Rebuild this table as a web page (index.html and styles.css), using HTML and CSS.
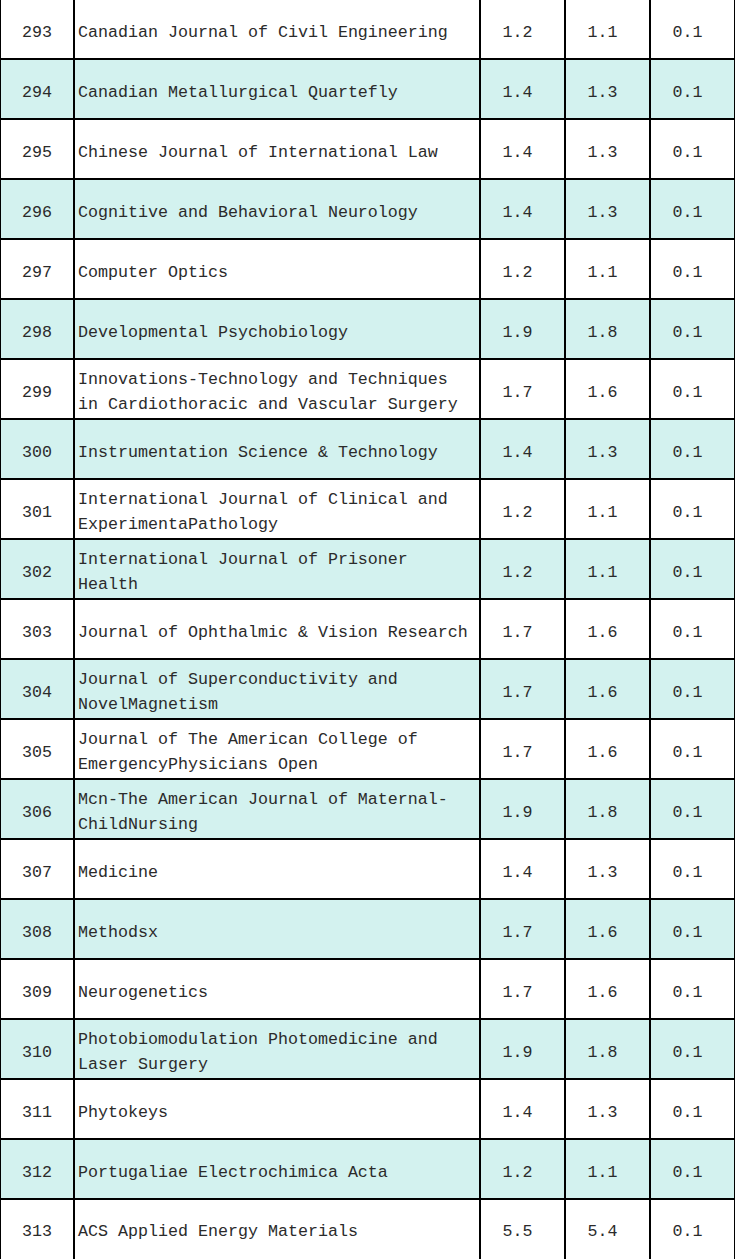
FILE: index.html
```html
<!DOCTYPE html>
<html lang="en">
<head>
<meta charset="utf-8">
<title>Journal list</title>
<link rel="stylesheet" href="styles.css">
</head>
<body>
<div class="frame">
<table class="jt">
<colgroup>
<col class="c-no"><col class="c-name"><col class="c-v"><col class="c-v"><col class="c-v">
</colgroup>
<tbody>
<tr><td class="no">293</td><td class="name">Canadian Journal of Civil Engineering</td><td class="v">1.2</td><td class="v">1.1</td><td class="v">0.1</td></tr>
<tr class="alt"><td class="no">294</td><td class="name">Canadian Metallurgical Quartefly</td><td class="v">1.4</td><td class="v">1.3</td><td class="v">0.1</td></tr>
<tr><td class="no">295</td><td class="name">Chinese Journal of International Law</td><td class="v">1.4</td><td class="v">1.3</td><td class="v">0.1</td></tr>
<tr class="alt"><td class="no">296</td><td class="name">Cognitive and Behavioral Neurology</td><td class="v">1.4</td><td class="v">1.3</td><td class="v">0.1</td></tr>
<tr><td class="no">297</td><td class="name">Computer Optics</td><td class="v">1.2</td><td class="v">1.1</td><td class="v">0.1</td></tr>
<tr class="alt"><td class="no">298</td><td class="name">Developmental Psychobiology</td><td class="v">1.9</td><td class="v">1.8</td><td class="v">0.1</td></tr>
<tr><td class="no">299</td><td class="name">Innovations-Technology and Techniques in Cardiothoracic and Vascular Surgery</td><td class="v">1.7</td><td class="v">1.6</td><td class="v">0.1</td></tr>
<tr class="alt"><td class="no">300</td><td class="name">Instrumentation Science &amp; Technology</td><td class="v">1.4</td><td class="v">1.3</td><td class="v">0.1</td></tr>
<tr><td class="no">301</td><td class="name">International Journal of Clinical and ExperimentaPathology</td><td class="v">1.2</td><td class="v">1.1</td><td class="v">0.1</td></tr>
<tr class="alt"><td class="no">302</td><td class="name">International Journal of Prisoner Health</td><td class="v">1.2</td><td class="v">1.1</td><td class="v">0.1</td></tr>
<tr><td class="no">303</td><td class="name">Journal of Ophthalmic &amp; Vision Research</td><td class="v">1.7</td><td class="v">1.6</td><td class="v">0.1</td></tr>
<tr class="alt"><td class="no">304</td><td class="name">Journal of Superconductivity and NovelMagnetism</td><td class="v">1.7</td><td class="v">1.6</td><td class="v">0.1</td></tr>
<tr><td class="no">305</td><td class="name">Journal of The American College of EmergencyPhysicians Open</td><td class="v">1.7</td><td class="v">1.6</td><td class="v">0.1</td></tr>
<tr class="alt"><td class="no">306</td><td class="name">Mcn-The American Journal of Maternal-ChildNursing</td><td class="v">1.9</td><td class="v">1.8</td><td class="v">0.1</td></tr>
<tr><td class="no">307</td><td class="name">Medicine</td><td class="v">1.4</td><td class="v">1.3</td><td class="v">0.1</td></tr>
<tr class="alt"><td class="no">308</td><td class="name">Methodsx</td><td class="v">1.7</td><td class="v">1.6</td><td class="v">0.1</td></tr>
<tr><td class="no">309</td><td class="name">Neurogenetics</td><td class="v">1.7</td><td class="v">1.6</td><td class="v">0.1</td></tr>
<tr class="alt"><td class="no">310</td><td class="name">Photobiomodulation Photomedicine and Laser Surgery</td><td class="v">1.9</td><td class="v">1.8</td><td class="v">0.1</td></tr>
<tr><td class="no">311</td><td class="name">Phytokeys</td><td class="v">1.4</td><td class="v">1.3</td><td class="v">0.1</td></tr>
<tr class="alt"><td class="no">312</td><td class="name">Portugaliae Electrochimica Acta</td><td class="v">1.2</td><td class="v">1.1</td><td class="v">0.1</td></tr>
<tr class="last"><td class="no">313</td><td class="name">ACS Applied Energy Materials</td><td class="v">5.5</td><td class="v">5.4</td><td class="v">0.1</td></tr>
</tbody>
</table>
</div>
</body>
</html>
```

FILE: styles.css
```css
html, body {
  margin: 0;
  padding: 0;
  background: #ffffff;
}
.frame {
  width: 735px;
  height: 1259px;
  overflow: hidden;
}
.jt {
  border-collapse: collapse;
  table-layout: fixed;
  width: 737px;
  margin: -2px 0 0 -1px;
  font-family: "Liberation Mono", "DejaVu Sans Mono", monospace;
  font-size: 16.67px;
  line-height: 25px;
  color: #2b2b2b;
}
.c-no { width: 74px; }
.c-name { width: 406px; }
.c-v { width: 85px; }
.jt td {
  border: 2px solid #000000;
  height: 58px;
  padding: 6px 0 0 0;
  vertical-align: middle;
  box-sizing: border-box;
}
.jt tr { height: 60px; }
.jt tr.alt td { background: #d3f2ef; }
.jt tr.last td { border-bottom: 0; height: 62px; padding-top: 2px; }
.jt td.no { text-align: center; }
.jt td.name { padding: 6px 8px 0 3px; text-align: left; }
.jt tr.last td.name { padding-top: 2px; }
.jt td.v { text-align: center; padding-right: 10px; }
```
